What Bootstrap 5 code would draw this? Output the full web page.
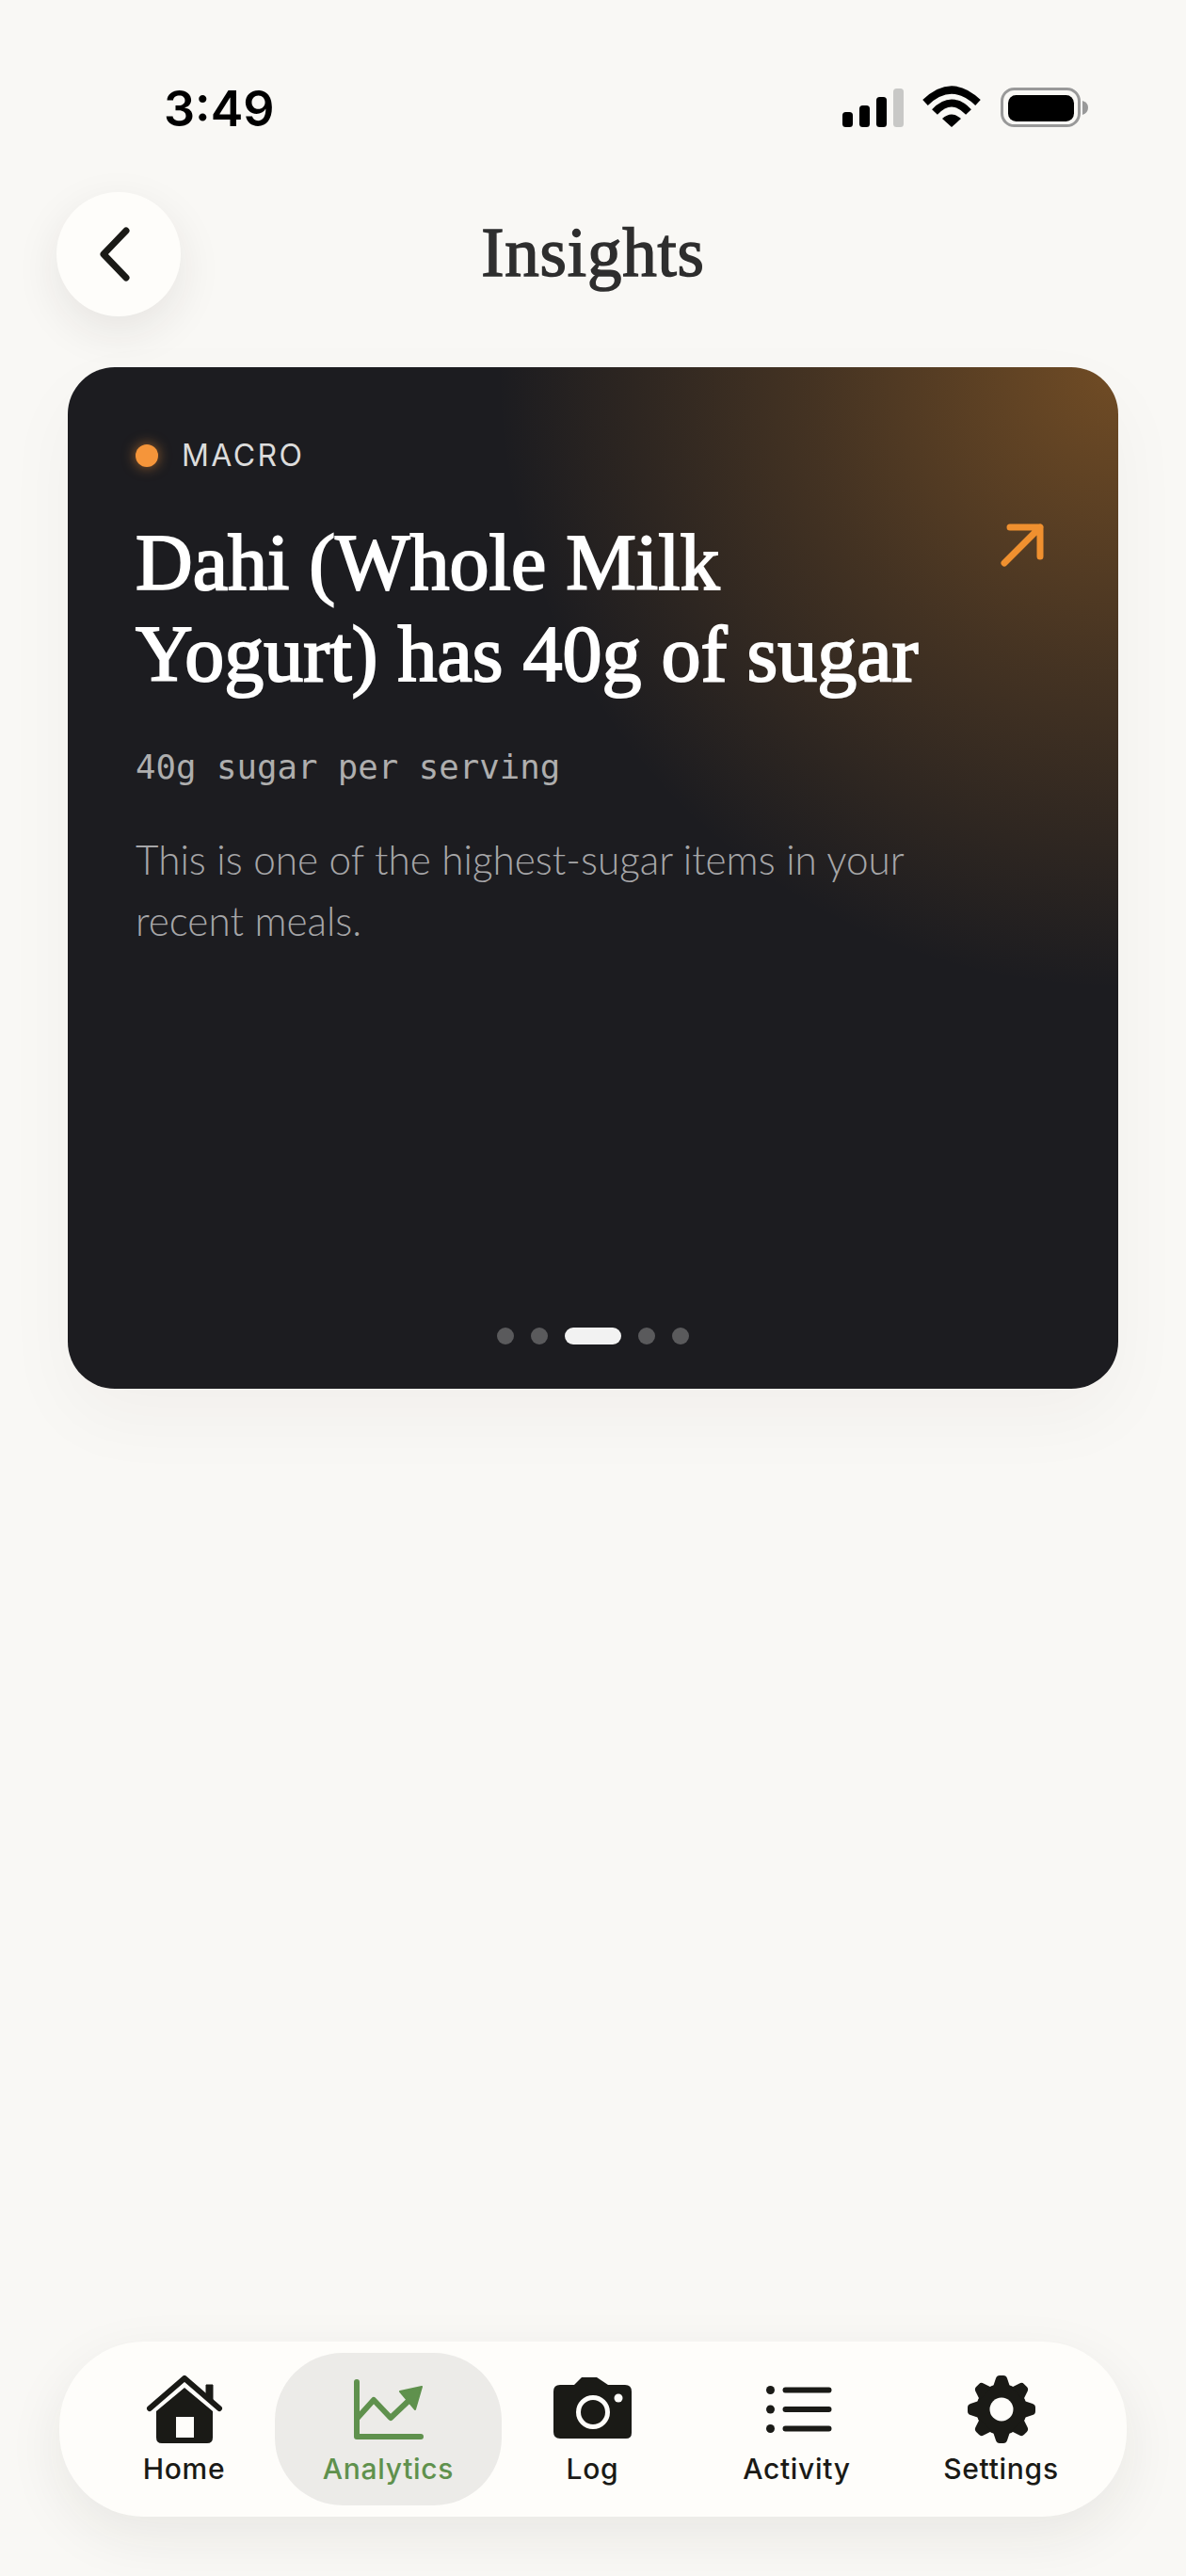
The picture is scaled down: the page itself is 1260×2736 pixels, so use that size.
<!DOCTYPE html>
<html lang="en">
<head>
    <meta charset="UTF-8" />
    <meta name="viewport" content="width=device-width, initial-scale=1.0"/>
    <title>Insights</title>
    <link href="https://cdn.jsdelivr.net/npm/bootstrap@5.3.3/dist/css/bootstrap.min.css" rel="stylesheet"/>
    <style>
        body { background: #f9f8f5; font-family: Inter, sans-serif; color: #1a1a16; }
        .app-screen { height: 2736px; }
        .status-bar { height: 204px; padding: 88px 103px 0 174px; }
        .status-time { font-size: 52px; line-height: 56px; font-weight: 600; color: #000; }
        .status-icons { margin-top: 3px; }
        .back-btn { width: 132px; height: 132px; background: #fefdfa; box-shadow: 0 16px 48px rgba(40,36,28,.09); }
        .top-bar { padding: 0 60px; }
        .page-title { font-family: "Liberation Serif", serif; font-size: 73px; line-height: 1; font-weight: 400; letter-spacing: .8px; -webkit-text-stroke: 1.5px #2e2e2e; color: #2e2e2e; margin: 0 0 4px; }
        .back-spacer { width: 132px; }
        .insight-box { margin: 54px 72px 0 72px; height: 1085px; border-radius: 50px; padding: 74px 72px 47px 72px; color: #fff;
            background-color: #1c1c20;
            background-image: radial-gradient(circle 660px at 100% 0, rgba(240,148,44,.4), rgba(240,148,44,.19) 50%, rgba(240,148,44,0) 100%);
            box-shadow: 0 30px 80px rgba(40,36,28,.04); }
        .type-row { gap: 25px; }
        .type-dot { width: 24px; height: 24px; background: #f5953a; box-shadow: 0 0 14px rgba(245,149,58,.6); }
        .type-label { font-size: 32px; line-height: 40px; letter-spacing: 2.4px; color: #dcdcdc; }
        .insight-title { font-family: "Liberation Serif", serif; font-size: 84px; line-height: 97px; font-weight: 400; -webkit-text-stroke: 2px #fff; margin: 45px 0 2px; width: 880px; }
        .insight-arrow { margin: 52px 7px 0 0; flex-shrink: 0; }
        .insight-metric { font-family: "DejaVu Sans Mono", monospace; font-size: 35.7px; line-height: 44px; color: #aeaeae; margin-top: 48px; }
        .insight-body { font-family: Lato, sans-serif; font-weight: 300; font-size: 42.3px; line-height: 65px; color: #a6a6a8; margin-top: 43px; width: 900px; }
        .pager-row { gap: 18px; }
        .pager-dot { width: 18px; height: 18px; background: #5a5a5c; }
        .pager-dot.is-on { width: 60px; background: #f2f2f2; }
        .tab-bar { margin: auto 63px 63px; height: 186px; border-radius: 90px; background: #fefdfa; padding: 12px 24px; box-shadow: 0 20px 60px rgba(40,36,28,.08); }
        .tab-item { width: 217px; height: 162px; padding-top: 24px; font-size: 30px; line-height: 36px; font-weight: 450; letter-spacing: .7px; color: #1a1a16; }
        .tab-item.is-active { width: 241px; margin: 0 -12px; background: #ecebe8; border-radius: 72px; color: #5f914d; font-weight: 500; }
        .tab-item svg { display: block; margin-bottom: 9px; }
    </style>
</head>
<body>

<div class="app-screen d-flex flex-column">

    <!-- Status bar -->
    <div class="status-bar d-flex justify-content-between align-items-start">
        <div class="status-time">3:49</div>
        <svg class="status-icons" width="262" height="44" viewBox="0 0 262 44">
            <rect x="0" y="28" width="11" height="16" rx="3.5" fill="#000"/>
            <rect x="18" y="21" width="11" height="23" rx="3.5" fill="#000"/>
            <rect x="36" y="12" width="11" height="32" rx="3.5" fill="#000"/>
            <rect x="54" y="3" width="11" height="41" rx="3.5" fill="#c8c8c6"/>
            <path d="M88 18 Q116 -9 144 18" fill="none" stroke="#000" stroke-width="8"/>
            <path d="M98 28 Q116 9 134 28" fill="none" stroke="#000" stroke-width="8"/>
            <path d="M116 44 L106 35 Q116 26 126 35 Z" fill="#000"/>
            <rect x="169.5" y="3.5" width="82" height="39" rx="13" fill="none" stroke="#999" stroke-width="3"/>
            <rect x="176" y="10" width="70" height="28" rx="8.5" fill="#000"/>
            <path d="M255 16 Q261 18 261 23 Q261 29 255 31 Z" fill="#999"/>
        </svg>
    </div>

    <!-- Header -->
    <div class="top-bar d-flex align-items-center">
        <button type="button" class="back-btn btn rounded-circle border-0 p-0 d-flex align-items-center justify-content-center">
            <svg width="44" height="60" viewBox="0 0 44 60"><path d="M30 5 L6 30 L30 55" fill="none" stroke="#1a1a16" stroke-width="7" stroke-linecap="round" stroke-linejoin="round"/></svg>
        </button>
        <h1 class="page-title flex-grow-1 text-center">Insights</h1>
        <div class="back-spacer"></div>
    </div>

    <!-- Insight card -->
    <div class="insight-box d-flex flex-column">
        <div class="d-flex align-items-center type-row type-label">
            <span class="type-dot rounded-circle"></span>
            <span>MACRO</span>
        </div>
        <div class="d-flex justify-content-between align-items-start">
            <h2 class="insight-title">Dahi (Whole Milk Yogurt) has 40g of sugar</h2>
            <svg class="insight-arrow" width="46" height="46" viewBox="0 0 46 46"><path d="M10 4 H42 V35 M42 4 L4 42" fill="none" stroke="#f0902f" stroke-width="7" stroke-linecap="round" stroke-linejoin="round"/></svg>
        </div>
        <div class="insight-metric">40g sugar per serving</div>
        <p class="insight-body">This is one of the highest-sugar items in your recent meals.</p>
        <div class="d-flex justify-content-center pager-row mt-auto">
            <span class="pager-dot rounded-pill"></span>
            <span class="pager-dot rounded-pill"></span>
            <span class="pager-dot is-on rounded-pill"></span>
            <span class="pager-dot rounded-pill"></span>
            <span class="pager-dot rounded-pill"></span>
        </div>
    </div>

    <!-- Bottom tabs -->
    <nav class="tab-bar d-flex">
        <div class="tab-item d-flex flex-column align-items-center">
            <svg width="84" height="72" viewBox="0 0 84 72">
                <path d="M12 38 L42 13 L72 38 V66 Q72 72 66 72 H18 Q12 72 12 66 Z M33 44 V66 H52 V44 Z" fill="#1a1a16" fill-rule="evenodd"/>
                <path d="M5 35 L42 3 L79 35" fill="none" stroke="#1a1a16" stroke-width="6" stroke-linecap="round" stroke-linejoin="round"/>
                <path d="M65 10 H72 V30 L65 24 Z" fill="#1a1a16" stroke="#1a1a16" stroke-width="1" stroke-linejoin="round"/>
            </svg>
            <span>Home</span>
        </div>
        <div class="tab-item is-active d-flex flex-column align-items-center">
            <svg width="84" height="72" viewBox="0 0 84 72">
                <path d="M8 7 V65 H76" fill="none" stroke="#5f914d" stroke-width="6" stroke-linecap="round" stroke-linejoin="round"/>
                <path d="M8 46 L26 26 L44 45 L63 27" fill="none" stroke="#5f914d" stroke-width="6" stroke-linejoin="round"/>
                <path d="M77 12 L54 17 L70 36 Z" fill="#5f914d" stroke="#5f914d" stroke-width="2" stroke-linejoin="round"/>
            </svg>
            <span>Analytics</span>
        </div>
        <div class="tab-item d-flex flex-column align-items-center">
            <svg width="84" height="72" viewBox="0 0 84 72">
                <path d="M7 10 H22 L30 2 H46 L58 10 H76 Q83 10 83 17 V61 Q83 67 77 67 H7 Q0 67 0 60 V17 Q0 10 7 10 Z" fill="#1a1a16"/>
                <circle cx="42" cy="39" r="15.5" fill="#1a1a16" stroke="#fefdfa" stroke-width="5"/>
                <circle cx="69" cy="24" r="4.5" fill="#fefdfa"/>
            </svg>
            <span>Log</span>
        </div>
        <div class="tab-item d-flex flex-column align-items-center">
            <svg width="84" height="72" viewBox="0 0 84 72">
                <circle cx="13.5" cy="15.5" r="4.5" fill="#1a1a16"/>
                <circle cx="13.5" cy="36" r="4.5" fill="#1a1a16"/>
                <circle cx="13.5" cy="56.5" r="4.5" fill="#1a1a16"/>
                <path d="M29.5 15.5 H75.5 M29.5 36 H75.5 M29.5 56.5 H75.5" fill="none" stroke="#1a1a16" stroke-width="6" stroke-linecap="round"/>
            </svg>
            <span>Activity</span>
        </div>
        <div class="tab-item d-flex flex-column align-items-center">
            <svg width="84" height="72" viewBox="-42 -36 84 72">
                <defs><path id="gear-tooth" d="M-9 -24 L-6 -33 Q-5 -36 -2 -36 H2 Q5 -36 6 -33 L9 -24 Z" fill="#1a1a16"/></defs>
                <circle r="27" fill="#1a1a16"/>
                <use href="#gear-tooth"/>
                <use href="#gear-tooth" transform="rotate(45)"/>
                <use href="#gear-tooth" transform="rotate(90)"/>
                <use href="#gear-tooth" transform="rotate(135)"/>
                <use href="#gear-tooth" transform="rotate(180)"/>
                <use href="#gear-tooth" transform="rotate(225)"/>
                <use href="#gear-tooth" transform="rotate(270)"/>
                <use href="#gear-tooth" transform="rotate(315)"/>
                <circle r="12.5" fill="#fefdfa"/>
            </svg>
            <span>Settings</span>
        </div>
    </nav>
</div>

<script src="https://cdn.jsdelivr.net/npm/bootstrap@5.3.3/dist/js/bootstrap.bundle.min.js"></script>
</body>
</html>
